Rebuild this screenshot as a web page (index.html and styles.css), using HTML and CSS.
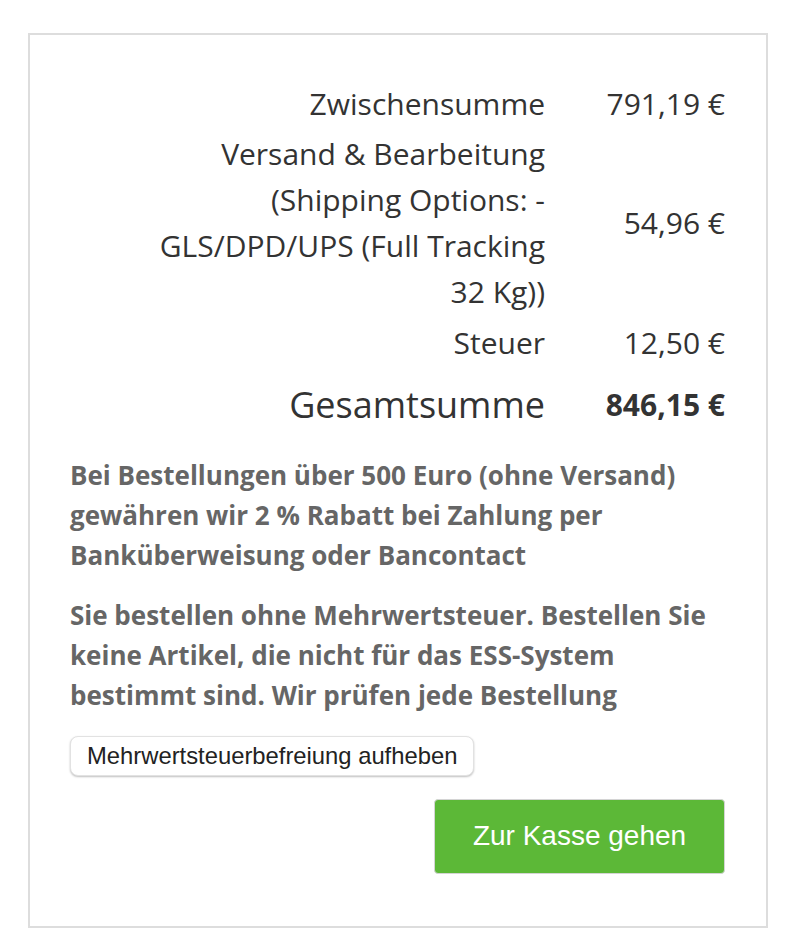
FILE: index.html
```html
<!DOCTYPE html>
<html lang="de">
<head>
  <meta charset="UTF-8">
  <title>Warenkorb Summen</title>
  <link rel="stylesheet" href="styles.css">
</head>
<body>
  <div class="cart-totals">
    <div class="totals">
      <div class="label">Zwischensumme</div>
      <div class="amount">791,19 €</div>

      <div class="label">Versand &amp; Bearbeitung<br>(Shipping Options: - GLS/DPD/UPS (Full Tracking 32 Kg))</div>
      <div class="amount">54,96 €</div>

      <div class="label">Steuer</div>
      <div class="amount">12,50 €</div>

      <div class="label total">Gesamtsumme</div>
      <div class="amount total"><strong>846,15 €</strong></div>
    </div>

    <p class="notice">Bei Bestellungen über 500 Euro (ohne Versand) gewähren wir 2 % Rabatt bei Zahlung per Banküberweisung oder Bancontact</p>
    <p class="notice">Sie bestellen ohne Mehrwertsteuer. Bestellen Sie keine Artikel, die nicht für das ESS-System bestimmt sind. Wir prüfen jede Bestellung</p>

    <button class="btn-vat" type="button">Mehrwertsteuerbefreiung aufheben</button>

    <div class="checkout">
      <a href="#" class="btn-checkout">Zur Kasse gehen</a>
    </div>
  </div>
</body>
</html>
```

FILE: styles.css
```css
body {
  margin: 0;
  background: #fff;
  font-family: "Open Sans", "Liberation Sans", sans-serif;
  color: #333;
}

.cart-totals {
  width: 740px;
  box-sizing: border-box;
  margin: 33px 0 0 28px;
  border: 2px solid #ddd;
  padding: 43px 41px 52px 40px;
}

.totals {
  display: grid;
  grid-template-columns: 400px 150px;
  column-gap: 30px;
  justify-content: end;
  font-size: 30px;
  line-height: 46px;
}

.label, .amount {
  text-align: right;
  padding: 2.5px 0 2px;
}

.amount {
  align-self: center;
}

.total {
  padding-top: 10px;
}

.label.total {
  font-size: 36px;
  line-height: 54px;
}

.notice {
  margin: 21px 0 20px;
  font-size: 26px;
  line-height: 40px;
  font-weight: 700;
  color: #666;
}

.notice + .notice {
  margin-top: 0;
}

.btn-vat {
  display: block;
  margin-top: 21px;
  height: 40px;
  padding: 0 16px;
  font-family: "Liberation Sans", Arial, sans-serif;
  font-size: 23.8px;
  color: #222;
  background: #fff;
  border: 1px solid #e2e2e2;
  border-radius: 8px;
  box-shadow: 0 1px 2px rgba(0, 0, 0, 0.25);
}

.checkout {
  display: flex;
  justify-content: flex-end;
  margin-top: 23px;
}

.btn-checkout {
  display: flex;
  align-items: center;
  justify-content: center;
  width: 291px;
  height: 75px;
  box-sizing: border-box;
  background: #5cb837;
  border: 1px solid #d4d4d4;
  border-radius: 4px;
  color: #fff;
  text-decoration: none;
  font-family: "Liberation Sans", Arial, sans-serif;
  font-size: 28px;
}
```
